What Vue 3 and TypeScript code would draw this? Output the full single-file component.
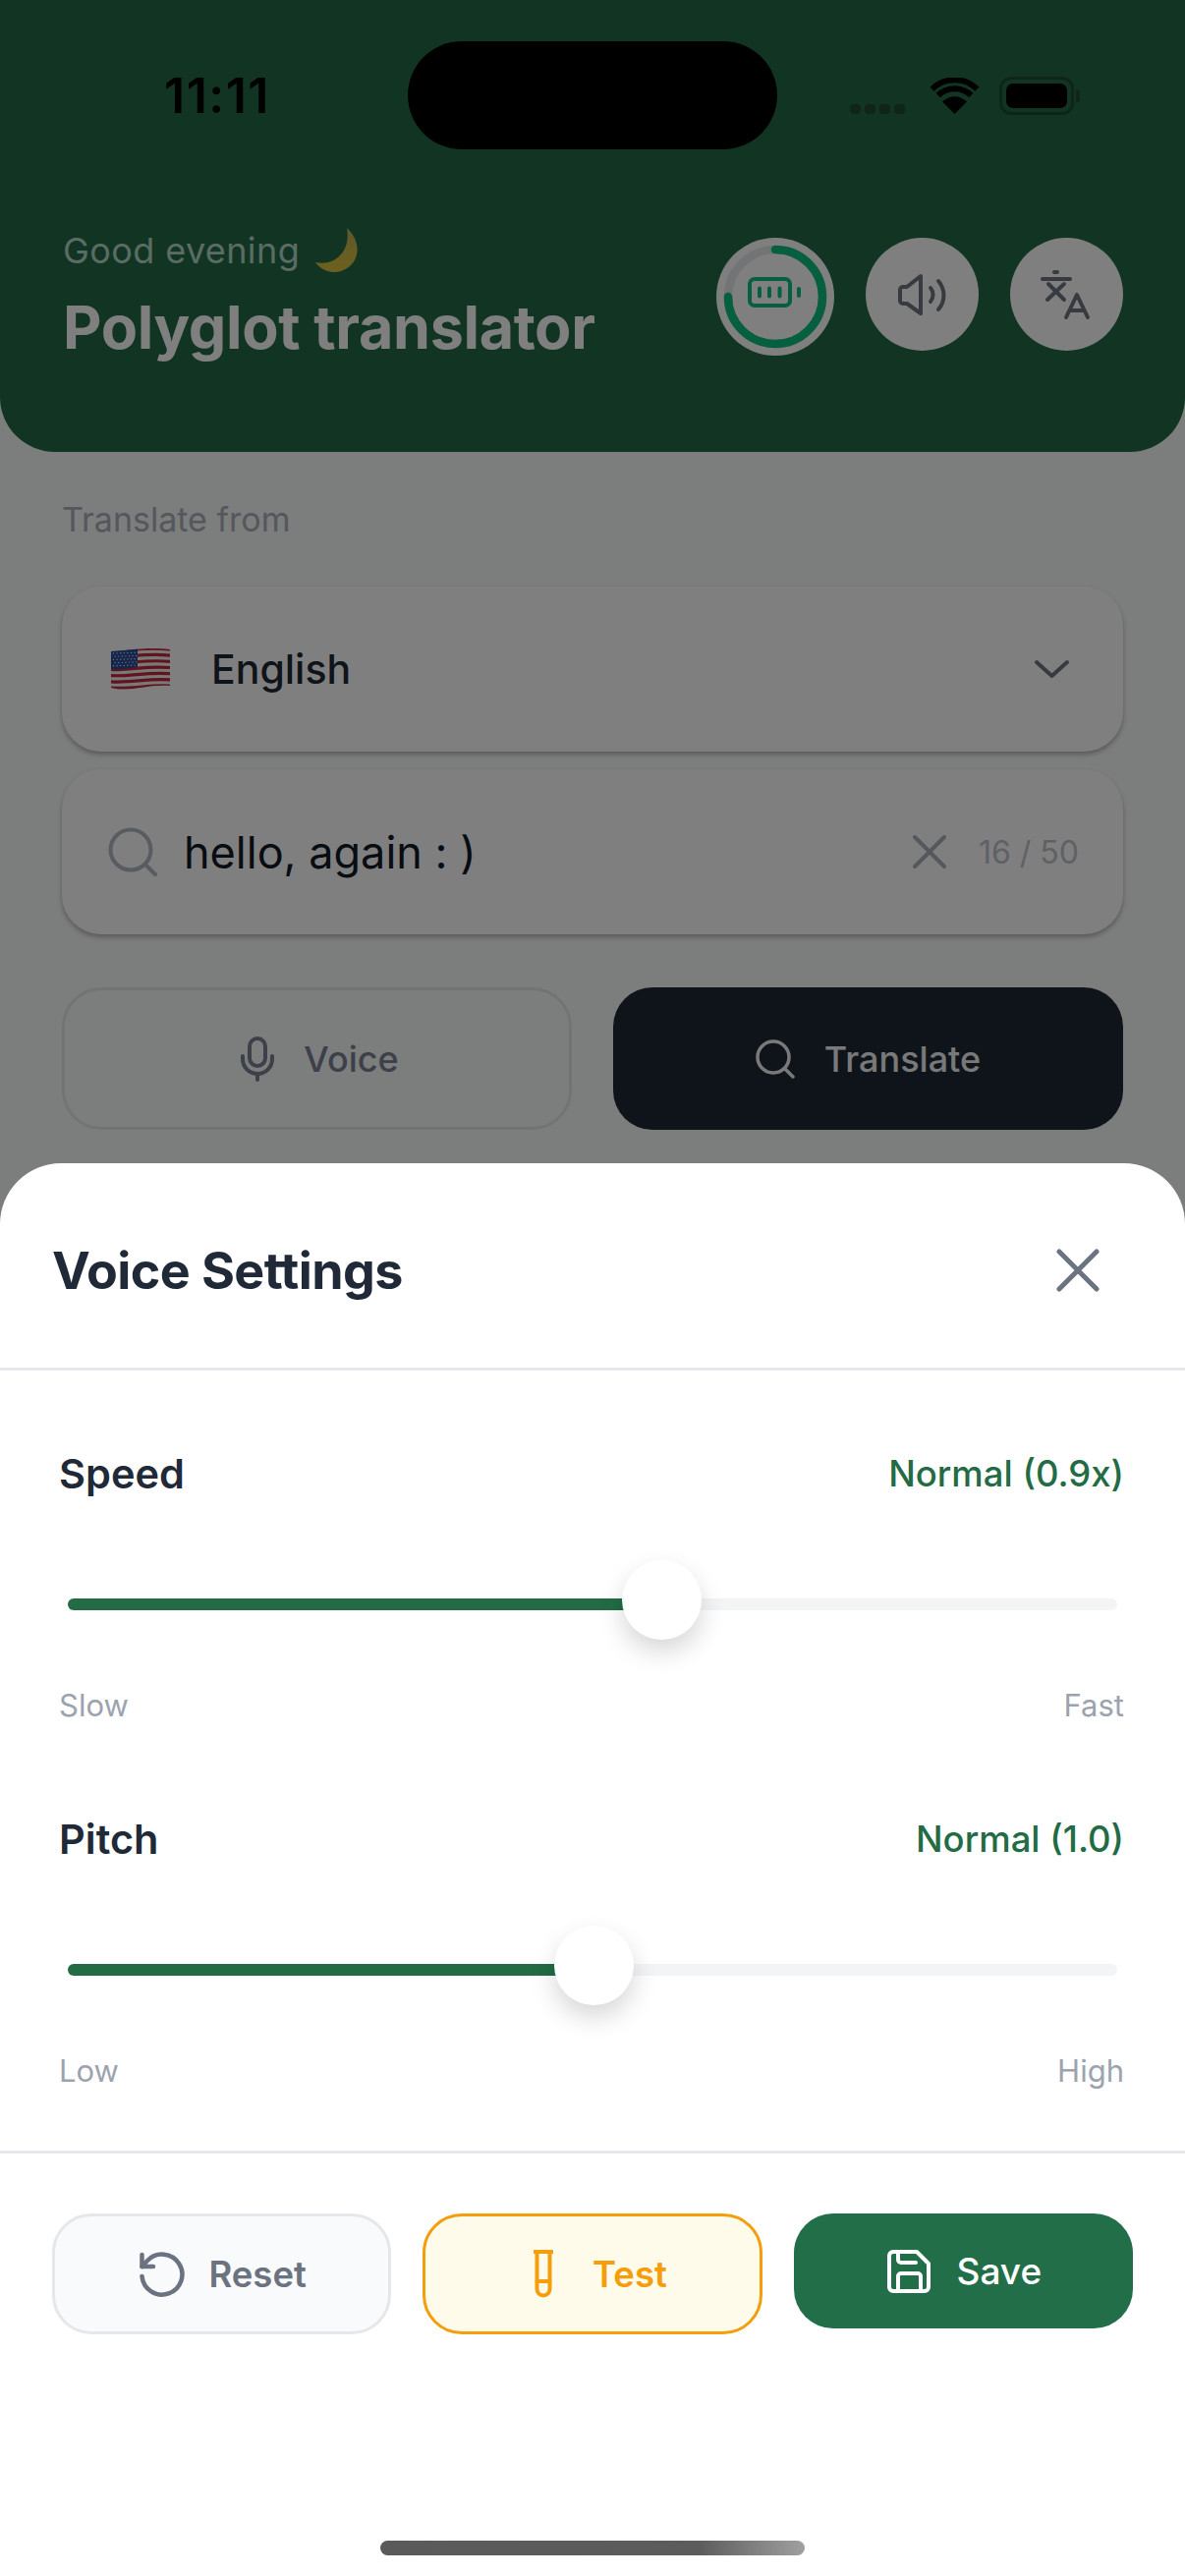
<script setup lang="ts">
import { ref } from 'vue'

// Slider rows of the sheet, value is where the thumb sits on the track
interface VoiceSlider {
  label: string
  valueText: string
  min: string
  max: string
  percent: number
}

const sliders = ref<VoiceSlider[]>([
  { label: 'Speed', valueText: 'Normal (0.9x)', min: 'Slow', max: 'Fast', percent: 56.6 },
  { label: 'Pitch', valueText: 'Normal (1.0)', min: 'Low', max: 'High', percent: 50.1 },
])

// Waving flag: seven red stripes following the same curve, stars on a grid
const flagStripes = [0, 1, 2, 3, 4, 5, 6].map((i) => {
  const t = (i * 37) / 6
  return `M0 ${4 + t} C20 ${3 + t + i * 0.5} 36 ${-1 + t + i * 0.3} 60 ${2 + t}`
})
const flagStars: number[][] = []
for (let row = 0; row < 5; row++) {
  for (let col = 0; col < 7; col++) {
    flagStars.push([2.5 + col * 3.6 + (row % 2) * 1.6, 6 + row * 3.2 - col * 0.12])
  }
}
</script>

<template>
  <div class="screen">
    <header class="hero">
      <div class="status">
        <span class="time">11:11</span>
        <div class="island"></div>
        <div class="status-icons">
          <div class="signal"><i v-for="n in 4" :key="n"></i></div>
          <svg class="wifi" width="51" height="37" viewBox="0 0 51 37">
            <path d="M25.5 37 L13 24.5 A17.7 17.7 0 0 1 38 24.5 Z" fill="#000" />
            <path d="M8.8 18 A24 24 0 0 1 42.2 18" fill="none" stroke="#000" stroke-width="6" />
            <path d="M2.6 11.6 A33 33 0 0 1 48.4 11.6" fill="none" stroke="#000" stroke-width="6" />
          </svg>
          <div class="battery"><span class="battery-fill"></span></div>
          <span class="battery-tip"></span>
        </div>
      </div>

      <div class="hero-row">
        <div class="hero-text">
          <div class="greeting">
            <span>Good evening</span>
            <svg width="46" height="46" viewBox="0 0 46 46">
              <defs>
                <linearGradient id="moon" x1="0" y1="0" x2="0" y2="1">
                  <stop offset="0" stop-color="#bdb25a" />
                  <stop offset="1" stop-color="#dcc23a" />
                </linearGradient>
              </defs>
              <path d="M32 0 C47 14 47 36 26 44 C16 47 6 43 0 35 C15 39 37 28 32 0 Z" fill="url(#moon)" />
            </svg>
          </div>
          <h1 class="title">Polyglot translator</h1>
        </div>
        <div class="actions">
          <div class="circle circle-battery">
            <svg width="120" height="120" viewBox="0 0 120 120">
              <circle cx="60" cy="60" r="48" fill="none" stroke="#e6e8ea" stroke-width="8.5" />
              <path d="M60 12 A48 48 0 1 1 12 60" fill="none" stroke="#0cbf7e" stroke-width="8.5" stroke-linecap="round" />
              <rect x="34" y="42" width="41" height="27" rx="5" fill="none" stroke="#0cbf7e" stroke-width="4" />
              <path d="M44 51.5v8M54 51.5v8M64.500 51.5v8M84 52v7" fill="none" stroke="#0cbf7e" stroke-width="4" stroke-linecap="round" />
            </svg>
          </div>
          <div class="circle">
            <svg width="52" height="44" viewBox="0 0 52 44" fill="none" stroke="#6e7480" stroke-width="4" stroke-linecap="round" stroke-linejoin="round">
              <path d="M24 3 L10 14 H6 a3 3 0 0 0 -3 3 V28 a3 3 0 0 0 3 3 H10 L24 41 Z" />
              <path d="M34 15 a11 11 0 0 1 0 14" />
              <path d="M42 8 a22 22 0 0 1 0 29" />
            </svg>
          </div>
          <div class="circle">
            <svg width="54" height="52" viewBox="0 0 54 52" fill="none" stroke="#6e7480" stroke-width="4" stroke-linecap="round" stroke-linejoin="round">
              <path d="M2 10 H30" />
              <path d="M14 3 H17" />
              <path d="M8 15 L24 31" />
              <path d="M24 15 L7 31" />
              <path d="M26 49 L37 26 L48 49" />
              <path d="M30 42 H44" />
            </svg>
          </div>
        </div>
      </div>
    </header>

    <main class="content">
      <p class="from-label">Translate from</p>
      <div class="card card-language">
        <svg class="flag" width="60" height="44" viewBox="0 0 60 44">
          <defs>
            <clipPath id="flag-shape">
              <path d="M0 4 C20 3 36 -1 60 2 V39 C36 37 20 46 0 41 Z" />
            </clipPath>
          </defs>
          <g clip-path="url(#flag-shape)">
            <rect width="60" height="44" fill="#f2f2f2" />
            <path v-for="d in flagStripes" :key="d" :d="d" fill="none" stroke="#c4283c" stroke-width="3.2" />
            <path d="M0 0 H27 V20 C18 21 10 23 0 22 Z" fill="#2b4d98" />
            <circle v-for="(s, i) in flagStars" :key="i" :cx="s[0]" :cy="s[1]" r="0.7" fill="#dfe6f5" />
          </g>
        </svg>
        <span class="language">English</span>
        <svg class="chevron" width="37" height="20" viewBox="0 0 37 20" fill="none" stroke="#6e7480" stroke-width="4" stroke-linecap="round" stroke-linejoin="round">
          <path d="M3 3 L18.500 17 L34 3" />
        </svg>
      </div>

      <div class="card card-search">
        <svg width="50" height="50" viewBox="0 0 50 50" fill="none" stroke="#b0b6c0" stroke-width="4" stroke-linecap="round">
          <circle cx="23" cy="23" r="20.500" />
          <path d="M38 38 L48 48" />
        </svg>
        <span class="query">hello, again : )</span>
        <svg class="clear" width="36" height="36" viewBox="0 0 36 36" fill="none" stroke="#a8aeb8" stroke-width="4" stroke-linecap="round">
          <path d="M3 3 L33 33 M33 3 L3 33" />
        </svg>
        <span class="count">16 / 50</span>
      </div>

      <div class="main-buttons">
        <button class="main-btn voice">
          <svg width="34" height="46" viewBox="0 0 34 46" fill="none" stroke="#7a8090" stroke-width="4" stroke-linecap="round">
            <rect x="9" y="2" width="16" height="28" rx="8" />
            <path d="M2 20 V23 a15 15 0 0 0 30 0 V20" />
            <path d="M17 38 V44" />
          </svg>
          <span>Voice</span>
        </button>
        <button class="main-btn translate">
          <svg width="40" height="40" viewBox="0 0 40 40" fill="none" stroke="#f2f2f2" stroke-width="3.500" stroke-linecap="round">
            <circle cx="18" cy="18" r="16" />
            <path d="M30 30 L38 38" />
          </svg>
          <span>Translate</span>
        </button>
      </div>
    </main>

    <div class="overlay"></div>

    <section class="sheet">
      <div class="sheet-head">
        <h2>Voice Settings</h2>
        <svg width="44" height="44" viewBox="0 0 44 44" fill="none" stroke="#6b7280" stroke-width="5" stroke-linecap="round">
          <path d="M3 3 L41 41 M41 3 L3 41" />
        </svg>
      </div>

      <div class="sheet-body">
        <div v-for="s in sliders" :key="s.label" class="setting">
          <div class="setting-head">
            <span class="setting-label">{{ s.label }}</span>
            <span class="setting-value">{{ s.valueText }}</span>
          </div>
          <div class="track">
            <div class="fill" :style="{ width: s.percent + '%' }"></div>
            <div class="thumb" :style="{ left: s.percent + '%' }"></div>
          </div>
          <div class="setting-range">
            <span>{{ s.min }}</span>
            <span>{{ s.max }}</span>
          </div>
        </div>
      </div>

      <div class="sheet-foot">
        <button class="foot-btn reset">
          <svg width="46" height="46" viewBox="0 0 46 46" fill="none" stroke="#6b7280" stroke-width="4.500" stroke-linecap="round" stroke-linejoin="round">
            <path d="M2.500 25 A20.500 20.500 0 1 0 8 9 L2.500 15" />
            <path d="M2.500 3 V15 H14" />
          </svg>
          <span>Reset</span>
        </button>
        <button class="foot-btn test">
          <svg width="20" height="50" viewBox="0 0 20 50" fill="none" stroke="#f59e0b" stroke-width="4" stroke-linecap="round">
            <path d="M1 2 H19" />
            <path d="M3.500 2 V40 a6.500 6.500 0 0 0 13 0 V2" />
            <path d="M3.500 32 H16.500" />
          </svg>
          <span>Test</span>
        </button>
        <button class="foot-btn save">
          <svg width="44" height="44" viewBox="0 0 44 44" fill="none" stroke="#fff" stroke-width="4" stroke-linecap="round" stroke-linejoin="round">
            <path d="M6 2 H30 L42 14 V38 a4 4 0 0 1 -4 4 H6 a4 4 0 0 1 -4 -4 V6 a4 4 0 0 1 4 -4 Z" />
            <path d="M11 2 V10 a3 3 0 0 0 3 3 H29" />
            <path d="M11 42 V27 a3 3 0 0 1 3 -3 H31 a3 3 0 0 1 3 3 V42" />
          </svg>
          <span>Save</span>
        </button>
      </div>

      <div class="home-bar"></div>
    </section>
  </div>
</template>

<style>
html,
body {
  margin: 0;
  background: #f9fafb;
}
</style>

<style scoped>
* {
  box-sizing: border-box;
}

.screen {
  position: relative;
  width: 1206px;
  height: 2622px;
  overflow: hidden;
  background: #f9fafb;
  font-family: Inter, "Liberation Sans", sans-serif;
}

.hero {
  height: 460px;
  background: #226b45;
  border-radius: 0 0 56px 56px;
  padding-top: 42px;
}

.status {
  display: flex;
  align-items: center;
  height: 110px;
  padding-left: 167px;
}

.time {
  width: 248px;
  font-size: 50px;
  font-weight: 600;
  letter-spacing: 1.5px;
  color: #000;
  line-height: 56px;
}

.island {
  width: 376px;
  height: 110px;
  border-radius: 55px;
  background: #000;
}

.status-icons {
  display: flex;
  align-items: flex-end;
  margin-left: 74px;
  height: 74px;
  padding-bottom: 18px;
}

.signal {
  display: flex;
  gap: 4px;
}

.signal i {
  width: 11px;
  height: 10px;
  border-radius: 4px;
  background: #1f4a33;
}

.wifi {
  margin-left: 25px;
}

.battery {
  width: 76px;
  height: 39px;
  margin-left: 20px;
  margin-bottom: -1px;
  padding: 4px;
  border: 3px solid #1f4a33;
  border-radius: 12px;
}

.battery-fill {
  display: block;
  height: 100%;
  border-radius: 7px;
  background: #000;
}

.battery-tip {
  width: 4px;
  height: 13px;
  margin: 0 0 12px 2px;
  border-radius: 0 3px 3px 0;
  background: #1f4a33;
}

.hero-row {
  display: flex;
  justify-content: space-between;
  align-items: flex-start;
  margin-top: 81px;
  padding: 0 63px 0 64px;
}

.greeting {
  display: flex;
  align-items: center;
  gap: 16px;
  height: 44px;
  font-size: 36px;
  letter-spacing: 0.4px;
  line-height: 44px;
  color: #b6d6ca;
}

.title {
  margin: 21px 0 0;
  font-size: 61px;
  letter-spacing: -0.35px;
  line-height: 70px;
  font-weight: 700;
  color: #fff;
}

.actions {
  display: flex;
  gap: 32px;
  margin-top: 9px;
}

.circle {
  display: flex;
  align-items: center;
  justify-content: center;
  width: 115px;
  height: 115px;
  border-radius: 50%;
  background: #fff;
}

.circle-battery {
  width: 120px;
  height: 120px;
}

.content {
  padding: 47px 63px 0;
}

.from-label {
  margin: 0;
  font-size: 34px;
  line-height: 44px;
  color: #a8aeb8;
}

.card {
  display: flex;
  align-items: center;
  height: 168px;
  background: #fff;
  border-radius: 40px;
  box-shadow: 0 3px 5px rgba(0, 0, 0, 0.28);
}

.card-language {
  margin-top: 46px;
  padding: 0 54px 0 50px;
}

.language {
  flex: 1;
  margin-left: 42px;
  font-size: 41px;
  font-weight: 500;
  color: #1f2937;
}

.card-search {
  margin-top: 18px;
  padding: 0 45px 0 47px;
}

.query {
  flex: 1;
  margin-left: 27px;
  font-size: 45px;
  color: #111827;
}

.count {
  margin-left: 32px;
  font-size: 32px;
  color: #bcc2cc;
}

.main-buttons {
  display: grid;
  grid-template-columns: 1fr 1fr;
  gap: 42px;
  margin-top: 54px;
}

.main-btn {
  display: flex;
  align-items: center;
  justify-content: center;
  height: 145px;
  padding: 0;
  gap: 30px;
  border-radius: 40px;
  font-family: inherit;
  font-size: 36px;
  font-weight: 500;
}

.voice {
  padding-left: 6px;
  background: transparent;
  border: 3px solid #e5e7eb;
  color: #7a8090;
}

.translate {
  background: #1f2937;
  border: none;
  color: #f2f2f2;
}

.overlay {
  position: absolute;
  inset: 0;
  background: rgba(0, 0, 0, 0.5);
}

.sheet {
  position: absolute;
  left: 0;
  right: 0;
  bottom: 0;
  height: 1438px;
  background: #fff;
  border-radius: 62px 62px 0 0;
}

.sheet-head {
  display: flex;
  justify-content: space-between;
  align-items: center;
  height: 211px;
  padding: 10px 87px 0 53px;
  border-bottom: 3px solid #e5e7eb;
}

.sheet-head h2 {
  margin: 0;
  font-size: 52px;
  font-weight: 700;
  letter-spacing: -0.6px;
  color: #1f2937;
}

.sheet-body {
  padding: 79px 62px 62px 60px;
  border-bottom: 3px solid #e5e7eb;
}

.setting + .setting {
  margin-top: 91px;
}

.setting-head {
  display: flex;
  justify-content: space-between;
  align-items: center;
  height: 52px;
}

.setting-label {
  font-size: 41.5px;
  font-weight: 600;
  color: #1f2937;
}

.setting-value {
  font-size: 36.5px;
  font-weight: 500;
  color: #226b45;
}

.track {
  position: relative;
  height: 12px;
  margin: 101px 7px 0 9px;
  border-radius: 6px;
  background: #f3f4f6;
}

.fill {
  height: 100%;
  border-radius: 6px;
  background: #226b45;
}

.thumb {
  position: absolute;
  top: -39px;
  width: 81px;
  height: 81px;
  margin-left: -40.500px;
  border-radius: 50%;
  background: #fff;
  box-shadow: 0 12px 26px rgba(0, 0, 0, 0.16);
}

.setting-range {
  display: flex;
  justify-content: space-between;
  margin-top: 78px;
  font-size: 31px;
  line-height: 38px;
  color: #9ca3af;
}

.sheet-foot {
  display: grid;
  grid-template-columns: repeat(3, 1fr);
  align-items: start;
  gap: 32px;
  margin-top: 61px;
  padding: 0 53px;
}

.foot-btn {
  display: flex;
  align-items: center;
  justify-content: center;
  height: 123px;
  padding: 0;
  gap: 27px;
  border-radius: 40px;
  font-family: inherit;
  font-size: 36.5px;
  font-weight: 600;
}

.reset {
  gap: 24px;
  padding-left: 3px;
  background: #f9fafb;
  border: 3px solid #e5e7eb;
  color: #6b7280;
}

.test {
  gap: 40px;
  padding-left: 16px;
  background: #fffbeb;
  border: 3px solid #f59e0b;
  color: #f59e0b;
}

.save {
  height: 117px;
  padding-left: 2px;
  background: #226e48;
  border: none;
  color: #fff;
  font-size: 37px;
  font-weight: 500;
}

.home-bar {
  position: absolute;
  left: 387px;
  bottom: 21px;
  width: 432px;
  height: 15px;
  border-radius: 8px;
  background: linear-gradient(90deg, #5a5a5a, #5c5c5c 75%, #a0a0a0);
}
</style>
